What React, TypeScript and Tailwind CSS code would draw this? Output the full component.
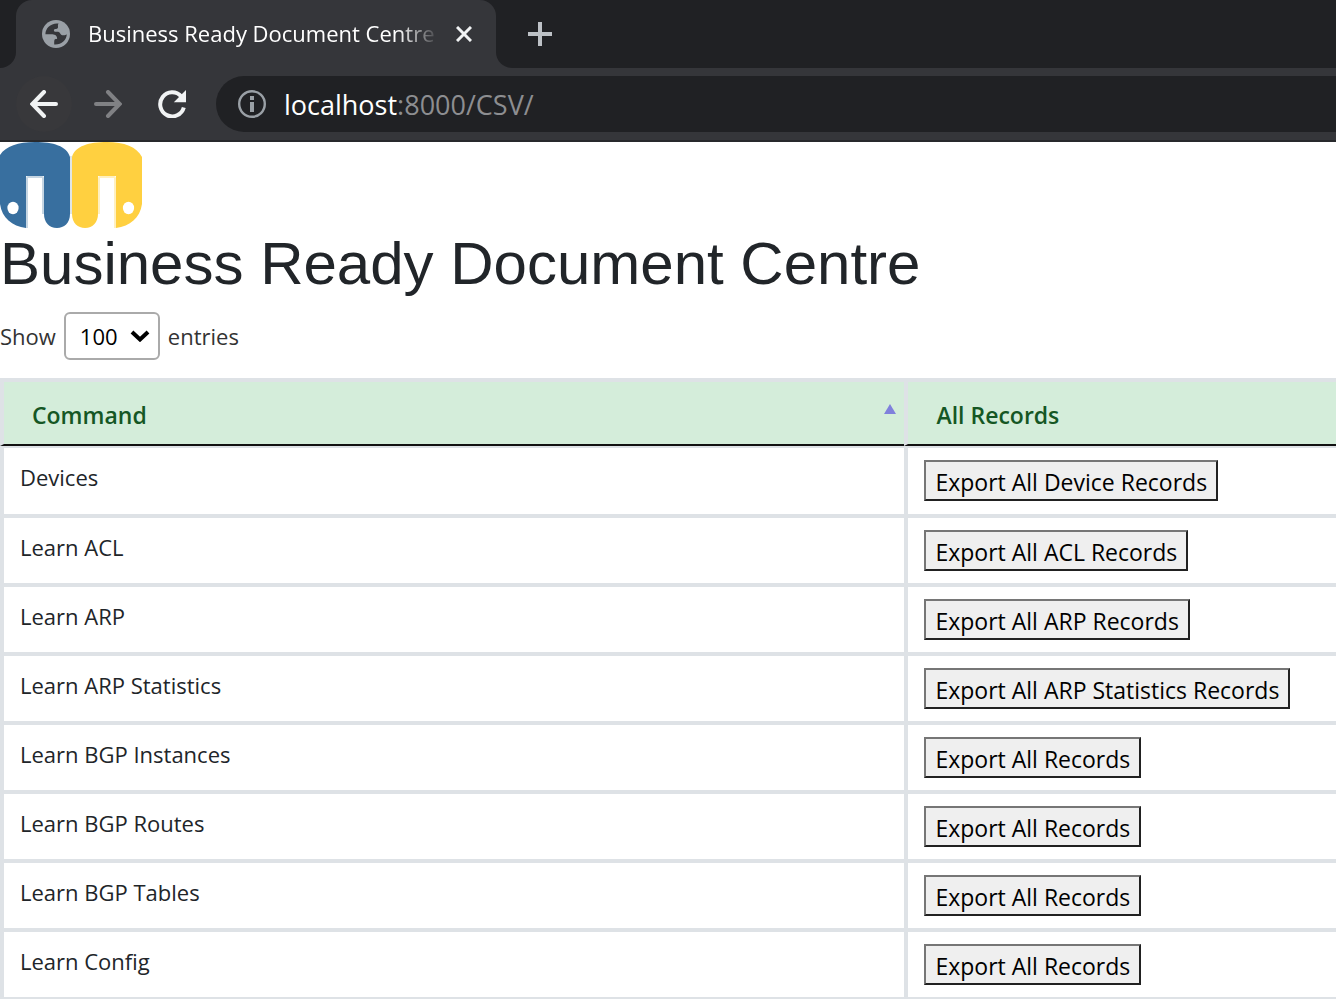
import { useState } from "react";

type CommandRow = { command: string; action: string };

const rows: CommandRow[] = [
  { command: "Devices", action: "Export All Device Records" },
  { command: "Learn ACL", action: "Export All ACL Records" },
  { command: "Learn ARP", action: "Export All ARP Records" },
  { command: "Learn ARP Statistics", action: "Export All ARP Statistics Records" },
  { command: "Learn BGP Instances", action: "Export All Records" },
  { command: "Learn BGP Routes", action: "Export All Records" },
  { command: "Learn BGP Tables", action: "Export All Records" },
  { command: "Learn Config", action: "Export All Records" },
];

function GlobeIcon() {
  return (
    <svg viewBox="0 0 28 28" className="size-7 shrink-0" aria-hidden="true">
      <circle cx="14" cy="14" r="14" fill="#9aa0a6" />
      <path
        d="M16.6 3.6C13 3 9 4.4 6.6 6.8C4.6 8.8 3.4 11.4 3.4 14.2H9.4C12.4 14.2 14.6 15 15.2 18.2C15.2 19 14 19 13 19.2C12.2 19.6 12.2 21 12.2 24.4C19 25 24.6 20.4 24.8 14.2C23.4 15.6 21.6 15.2 20.2 15.2C18.6 15 18.4 13 17.2 12.2C16 11.6 14.2 12 13 11.8C11.4 11.4 11.6 9.4 13 9C14.4 8.6 15.8 8.8 16 7.4C16.2 6 15.4 5 16.6 3.6Z"
        fill="#35363a"
      />
    </svg>
  );
}

function Logo() {
  return (
    <svg viewBox="0 0 142 86" className="block h-[86px] w-[142px]" role="img" aria-label="Logo">
      <path
        d="M0 13C6 4 18 0 35 0C53 0 67 4 70 15V72C70 81 64 86 57 86C49 86 44 80 44 72V34H26V86C12 84 2 76 0 62Z"
        fill="#386f9f"
      />
      <path
        d="M72 15C75 4 89 0 107 0C124 0 137 5 142 15V62C140 76 130 84 116 86V34H98V72C98 80 93 86 85 86C78 86 72 81 72 72Z"
        fill="#ffd040"
      />
      <path d="M71 14V72" stroke="#d5dde0" strokeWidth="1.5" />
      <path d="M27 86V36Q27 35 28 35H42Q43 35 43 36V72" fill="none" stroke="#c6d6e3" strokeWidth="2" />
      <path d="M99 72V36Q99 35 100 35H114Q115 35 115 36V86" fill="none" stroke="#fff0c0" strokeWidth="2" />
      <ellipse cx="13" cy="66" rx="5.6" ry="6.2" fill="#fff" />
      <ellipse cx="128.5" cy="66" rx="5.6" ry="6.2" fill="#fff" />
    </svg>
  );
}

function TabStrip() {
  return (
    <div className="flex h-[68px] items-stretch bg-[#202124]">
      <div className="flex w-4 bg-[#35363a]">
        <div className="flex-1 rounded-br-2xl bg-[#202124]" />
      </div>
      <div className="flex w-[480px] items-center rounded-t-2xl bg-[#35363a] pr-5 pl-[26px]">
        <GlobeIcon />
        <div className="ml-[18px] flex-1 overflow-hidden pb-0.5 text-[22px] whitespace-nowrap text-white [mask-image:linear-gradient(to_right,#000_88%,transparent)]">
          Business Ready Document Centre
        </div>
        <button type="button" aria-label="Close tab" className="ml-3 flex size-6 items-center justify-center">
          <svg viewBox="0 0 16 16" className="size-4" aria-hidden="true">
            <path d="M1 1L15 15M15 1L1 15" stroke="#f1f3f4" strokeWidth="3" />
          </svg>
        </button>
      </div>
      <div className="flex w-4 bg-[#35363a]">
        <div className="flex-1 rounded-bl-2xl bg-[#202124]" />
      </div>
      <button type="button" aria-label="New tab" className="flex w-14 items-center justify-center">
        <svg viewBox="0 0 24 24" className="size-6" aria-hidden="true">
          <path d="M12 0V24M0 12H24" stroke="#bdc1c6" strokeWidth="4" />
        </svg>
      </button>
    </div>
  );
}

function Toolbar() {
  return (
    <div className="flex h-[74px] items-center gap-2 border-b-2 border-[#28292c] bg-[#35363a] pl-4">
      <button type="button" aria-label="Back" className="flex size-14 items-center justify-center rounded-full bg-[#38383b]">
        <svg viewBox="0 0 28 28" className="size-7" fill="none" stroke="#f1f3f4" aria-hidden="true">
          <path d="M26 14H3M14 2L2.4 14L14 26" strokeWidth="4" strokeLinecap="round" />
        </svg>
      </button>
      <button type="button" aria-label="Forward" className="flex size-14 items-center justify-center">
        <svg viewBox="0 0 28 28" className="size-7" fill="none" stroke="#808184" aria-hidden="true">
          <path d="M2 14H25M14 2L25.6 14L14 26" strokeWidth="4" strokeLinecap="round" />
        </svg>
      </button>
      <button type="button" aria-label="Reload" className="flex size-14 items-center justify-center">
        <svg viewBox="0 0 28 28" className="size-7" fill="none" aria-hidden="true">
          <path d="M23.2 6.4A12 12 0 1 0 25.8 17.5" stroke="#f1f3f4" strokeWidth="4" />
          <path d="M28 0V12.2H15.8Z" fill="#f1f3f4" />
        </svg>
      </button>
      <div className="ml-2 flex h-14 flex-1 items-center gap-[18px] rounded-l-full bg-[#202124] pl-[22px]">
        <svg viewBox="0 0 28 28" className="size-7" fill="none" aria-hidden="true">
          <circle cx="14" cy="14" r="12.8" stroke="#9aa0a6" strokeWidth="2.4" />
          <path d="M14 12V22M14 6V10" stroke="#9aa0a6" strokeWidth="4" />
        </svg>
        <div className="text-[27px] leading-none text-[#8d8e91]">
          <span className="text-white">localhost</span>:8000/CSV/
        </div>
      </div>
    </div>
  );
}

export default function App() {
  const [length, setLength] = useState("100");
  return (
    <div className="flex h-screen flex-col overflow-hidden bg-white font-['Open_Sans',sans-serif]">
      <header className="shrink-0">
        <TabStrip />
        <Toolbar />
      </header>
      <main className="min-h-0 flex-1 overflow-hidden">
        <Logo />
        <h1 className="font-['Liberation_Sans',sans-serif] text-[60px] leading-[72px] text-[#212529]">
          Business Ready Document Centre
        </h1>
        <div className="mt-3 flex h-12 items-center text-[22px] text-[#333]">
          <label htmlFor="length">Show</label>
          <div className="relative mx-2">
            <select
              id="length"
              value={length}
              onChange={(e) => setLength(e.target.value)}
              className="block h-12 w-24 appearance-none rounded-md border-2 border-[#aaa] bg-transparent pl-3.5 text-[22px] text-black"
            >
              <option>10</option>
              <option>25</option>
              <option>50</option>
              <option>100</option>
            </select>
            <svg viewBox="0 0 20 12" className="pointer-events-none absolute top-[18px] right-2.5 h-3 w-5" fill="none" aria-hidden="true">
              <path d="M2 2L10 9.5L18 2" stroke="#000" strokeWidth="4" />
            </svg>
          </div>
          <span>entries</span>
        </div>
        <table className="mt-[18px] w-full table-fixed border-separate border-spacing-0 text-left">
          <thead>
            <tr className="bg-[#d4edda] text-[23px] text-[#155724]">
              <th className="h-[68px] w-[67.7%] border-t-4 border-b-2 border-l-4 border-t-[#dee2e6] border-b-[#111] border-l-[#dee2e6] px-0 pt-1 pb-0 font-semibold">
                <div className="flex items-center justify-between pr-2 pl-7">
                  Command
                  <svg viewBox="0 0 12 10" className="mb-3 h-2.5 w-3" aria-hidden="true">
                    <path d="M6 0L12 10H0Z" fill="#8080dc" />
                  </svg>
                </div>
              </th>
              <th className="h-[68px] border-t-4 border-b-2 border-l-4 border-t-[#dee2e6] border-b-[#111] border-l-[#dee2e6] pt-1 pr-0 pb-0 pl-7 font-semibold">
                All Records
              </th>
            </tr>
          </thead>
          <tbody className="text-[22px] text-[#212529]">
            {rows.map((row) => (
              <tr key={row.command} className="group">
                <td className="border-b-4 border-l-4 border-[#dee2e6] px-4 py-3 align-top leading-[34px] group-first:border-t-2">
                  {row.command}
                </td>
                <td className="border-b-4 border-l-4 border-[#dee2e6] px-4 py-3 align-top group-first:border-t-2 group-first:pb-[13px]">
                  <button
                    type="button"
                    className="block h-[41px] border-2 border-t-[#767676] border-r-[#212121] border-b-[#212121] border-l-[#767676] bg-[#efefef] px-[9px] pt-0.5 text-[23px] leading-8 whitespace-nowrap text-black"
                  >
                    {row.action}
                  </button>
                </td>
              </tr>
            ))}
          </tbody>
        </table>
      </main>
    </div>
  );
}
